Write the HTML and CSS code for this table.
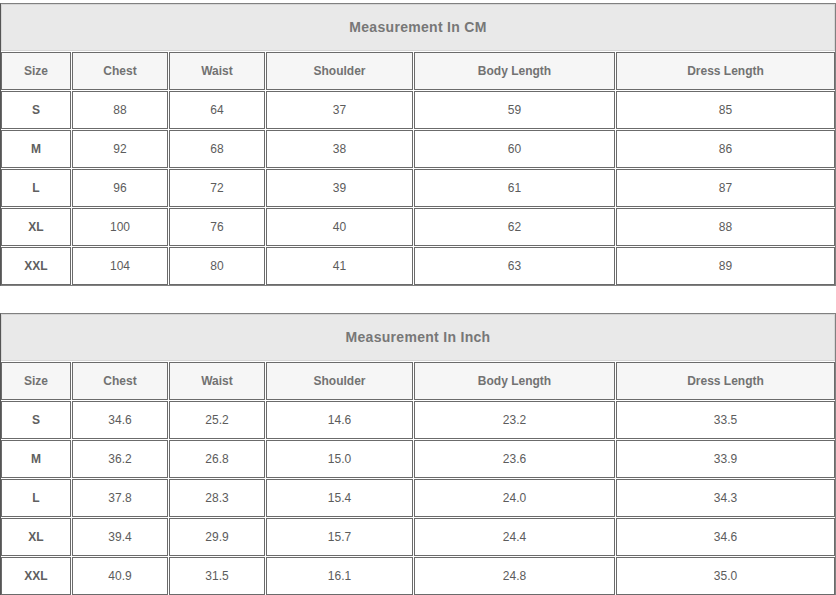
FILE: index.html
```html
<!DOCTYPE html>
<html>
<head>
<meta charset="utf-8">
<link rel="stylesheet" href="styles.css">
</head>
<body>
<div class="page">
  <div class="chart">
    <div class="cell title">Measurement In CM</div>
    <div class="cell head">Size</div><div class="cell head">Chest</div><div class="cell head">Waist</div><div class="cell head">Shoulder</div><div class="cell head">Body Length</div><div class="cell head">Dress Length</div>
    <div class="cell size">S</div><div class="cell">88</div><div class="cell">64</div><div class="cell">37</div><div class="cell">59</div><div class="cell">85</div>
    <div class="cell size">M</div><div class="cell">92</div><div class="cell">68</div><div class="cell">38</div><div class="cell">60</div><div class="cell">86</div>
    <div class="cell size">L</div><div class="cell">96</div><div class="cell">72</div><div class="cell">39</div><div class="cell">61</div><div class="cell">87</div>
    <div class="cell size">XL</div><div class="cell">100</div><div class="cell">76</div><div class="cell">40</div><div class="cell">62</div><div class="cell">88</div>
    <div class="cell size">XXL</div><div class="cell">104</div><div class="cell">80</div><div class="cell">41</div><div class="cell">63</div><div class="cell">89</div>
  </div>
  <div class="chart">
    <div class="cell title">Measurement In Inch</div>
    <div class="cell head">Size</div><div class="cell head">Chest</div><div class="cell head">Waist</div><div class="cell head">Shoulder</div><div class="cell head">Body Length</div><div class="cell head">Dress Length</div>
    <div class="cell size">S</div><div class="cell">34.6</div><div class="cell">25.2</div><div class="cell">14.6</div><div class="cell">23.2</div><div class="cell">33.5</div>
    <div class="cell size">M</div><div class="cell">36.2</div><div class="cell">26.8</div><div class="cell">15.0</div><div class="cell">23.6</div><div class="cell">33.9</div>
    <div class="cell size">L</div><div class="cell">37.8</div><div class="cell">28.3</div><div class="cell">15.4</div><div class="cell">24.0</div><div class="cell">34.3</div>
    <div class="cell size">XL</div><div class="cell">39.4</div><div class="cell">29.9</div><div class="cell">15.7</div><div class="cell">24.4</div><div class="cell">34.6</div>
    <div class="cell size">XXL</div><div class="cell">40.9</div><div class="cell">31.5</div><div class="cell">16.1</div><div class="cell">24.8</div><div class="cell">35.0</div>
  </div>
</div>
</body>
</html>
```
FILE: styles.css
```css
* { box-sizing: border-box; }
html, body { margin: 0; padding: 0; background: #fff; }
body { font-family: "Liberation Sans", Arial, sans-serif; }
.page {
  width: 836px;
  padding-top: 3px;
  display: flex;
  flex-direction: column;
  gap: 27px;
}
.chart {
  display: grid;
  grid-template-columns: 70px 96px 96px 147px 201px 219px;
  grid-template-rows: 47px repeat(6, 38px);
  gap: 1px;
  border: 1px solid #808080;
  border-left: 1px solid #555;
  background: #fff;
}
.cell {
  display: flex;
  align-items: center;
  justify-content: center;
  border: 1px solid #6b6b6b;
  font-size: 12px;
  color: #5c5c5c;
  background: #fff;
}
.title {
  grid-column: 1 / -1;
  background: #e9e9e9;
  border: 1px solid #d6d6d6;
  padding-bottom: 2px;
  font-size: 14px;
  font-weight: bold;
  letter-spacing: 0.3px;
  color: #777;
}
.head {
  background: #f6f6f6;
  font-weight: bold;
  color: #727272;
}
.size {
  font-weight: bold;
  color: #606060;
}
```
